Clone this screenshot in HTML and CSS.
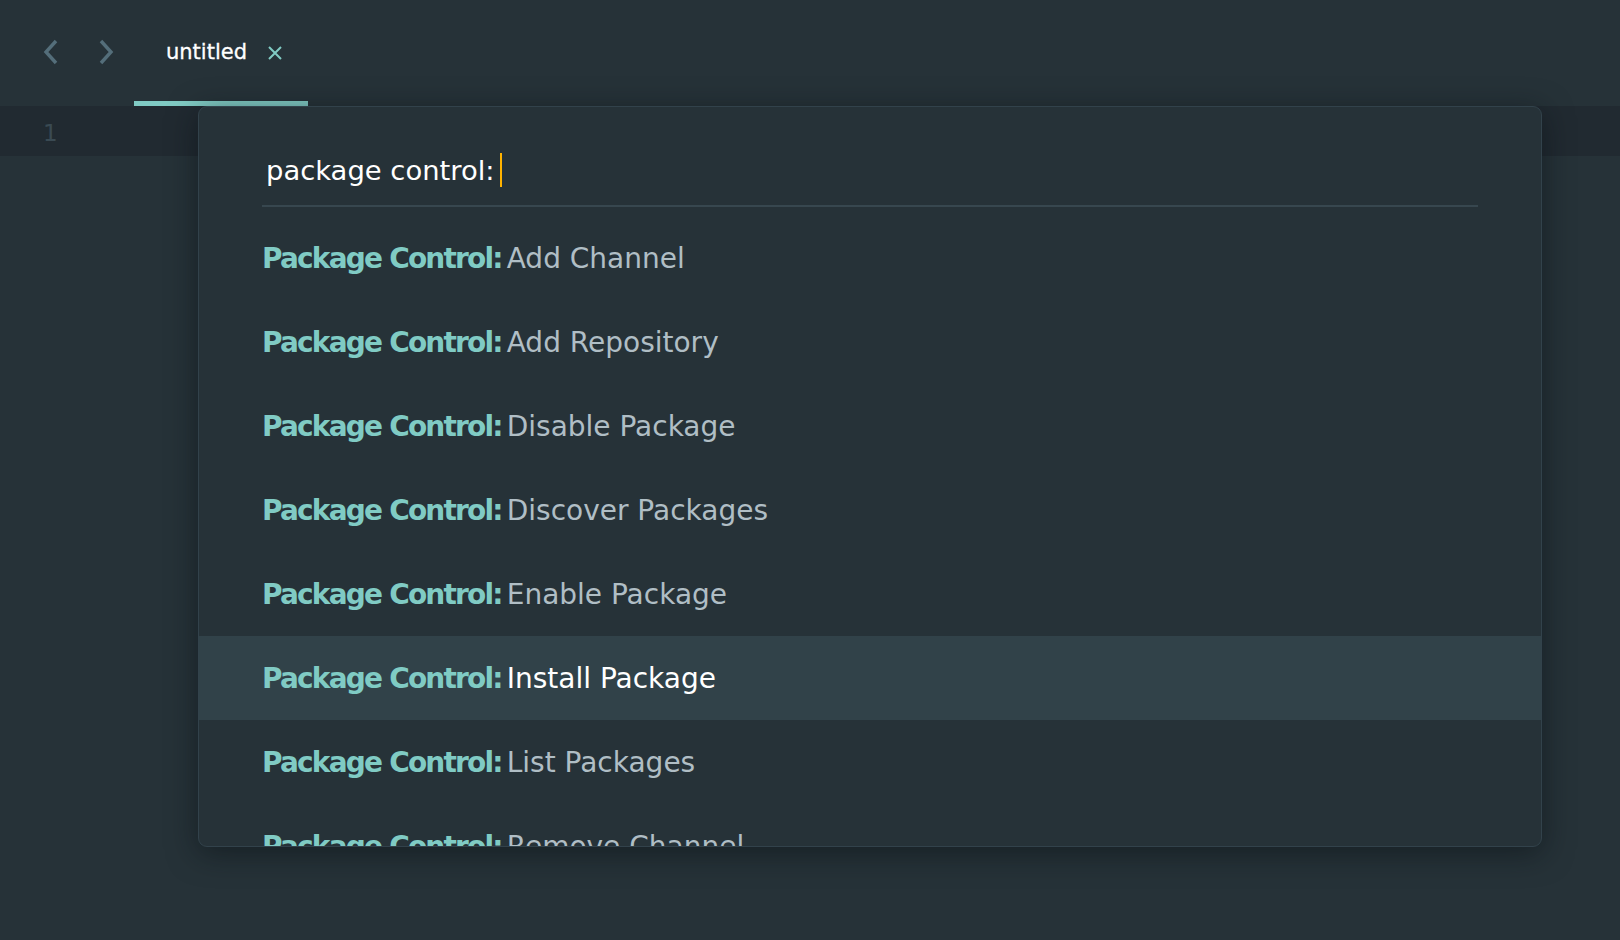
FILE: index.html
```html
<!DOCTYPE html>
<html>
<head>
<meta charset="utf-8">
<link rel="stylesheet" href="styles.css">
</head>
<body>
<div class="app">
  <div class="tabbar">
    <div class="navs">
      <svg class="nav" width="18" height="26" viewBox="0 0 18 26"><path d="M14 2 L4 13 L14 24" fill="none" stroke="#546e7a" stroke-width="3.4"/></svg>
      <svg class="nav" width="18" height="26" viewBox="0 0 18 26"><path d="M4 2 L14 13 L4 24" fill="none" stroke="#546e7a" stroke-width="3.4"/></svg>
    </div>
    <div class="tab">
      <span class="tab-title">untitled</span>
      <svg class="tab-close" width="16" height="16" viewBox="0 0 16 16"><path d="M2 2 L14 14 M14 2 L2 14" stroke="#80cbc4" stroke-width="2"/></svg>
    </div>
  </div>
  <div class="editor">
    <div class="line-row"><span class="lineno">1</span></div>
  </div>

  <div class="palette">
    <div class="input-wrap">
      <div class="input"><span>package control:</span><span class="caret"></span></div>
    </div>
    <div class="items">
      <div class="item"><span class="pre">Package Control:</span><span class="cmd">Add Channel</span></div>
      <div class="item"><span class="pre">Package Control:</span><span class="cmd">Add Repository</span></div>
      <div class="item"><span class="pre">Package Control:</span><span class="cmd">Disable Package</span></div>
      <div class="item"><span class="pre">Package Control:</span><span class="cmd">Discover Packages</span></div>
      <div class="item"><span class="pre">Package Control:</span><span class="cmd">Enable Package</span></div>
      <div class="item selected"><span class="pre">Package Control:</span><span class="cmd">Install Package</span></div>
      <div class="item"><span class="pre">Package Control:</span><span class="cmd">List Packages</span></div>
      <div class="item"><span class="pre">Package Control:</span><span class="cmd">Remove Channel</span></div>
    </div>
  </div>
</div>
</body>
</html>
```
FILE: styles.css
```css
* { box-sizing: border-box; }
html, body { margin: 0; padding: 0; }
body {
  width: 1620px;
  height: 940px;
  background: #263238;
  font-family: "DejaVu Sans", "Liberation Sans", sans-serif;
  overflow: hidden;
}
.app { position: relative; width: 1620px; height: 940px; }
.tabbar {
  height: 106px;
  display: flex;
  align-items: stretch;
  background: #263238;
}
.navs {
  display: flex;
  align-items: center;
  gap: 37px;
  padding-left: 42px;
  width: 134px;
  padding-bottom: 2px;
}
.tab {
  width: 174px;
  display: flex;
  align-items: center;
  padding-left: 32px;
  gap: 20px;
  border-bottom: 5px solid #80cbc4;
}
.tab-title {
  color: #ffffff;
  font-size: 21px;
  font-weight: 500;
  letter-spacing: 0;
  padding-top: 2px;
  -webkit-text-stroke: 0.3px #ffffff;
}
.tab-close { display: block; margin-top: 4px; }
.editor { height: 834px; }
.line-row {
  height: 50px;
  background: #212a31;
  display: flex;
  align-items: center;
  padding-left: 43px;
}
.lineno { color: #3a4a53; font-size: 23px; padding-top: 4px; }

.palette {
  position: absolute;
  left: 198px;
  top: 106px;
  width: 1344px;
  height: 741px;
  background: #263238;
  border: 1px solid #32424b;
  border-radius: 9px;
  box-shadow: 0 6px 30px rgba(10, 16, 20, 0.55);
  overflow: hidden;
}
.input-wrap { padding: 0 63px 0 63px; }
.input {
  height: 100px;
  border-bottom: 2px solid #37474f;
  display: flex;
  align-items: center;
  padding-left: 4px;
  padding-top: 28px;
  color: #ffffff;
  font-size: 27.4px;
}
.caret {
  width: 2px;
  height: 34px;
  background: #ffb300;
  margin-left: 5px;
}
.items { padding-top: 9px; }
.item {
  height: 84px;
  display: flex;
  align-items: center;
  padding-left: 63px;
  font-size: 28px;
  white-space: pre;
}
.item.selected { background: #314249; }
.pre { color: #80cbc4; font-weight: bold; letter-spacing: -1.8px; }
.cmd { color: #b0bec5; margin-left: 5px; }
.selected .cmd { color: #ffffff; }
```
